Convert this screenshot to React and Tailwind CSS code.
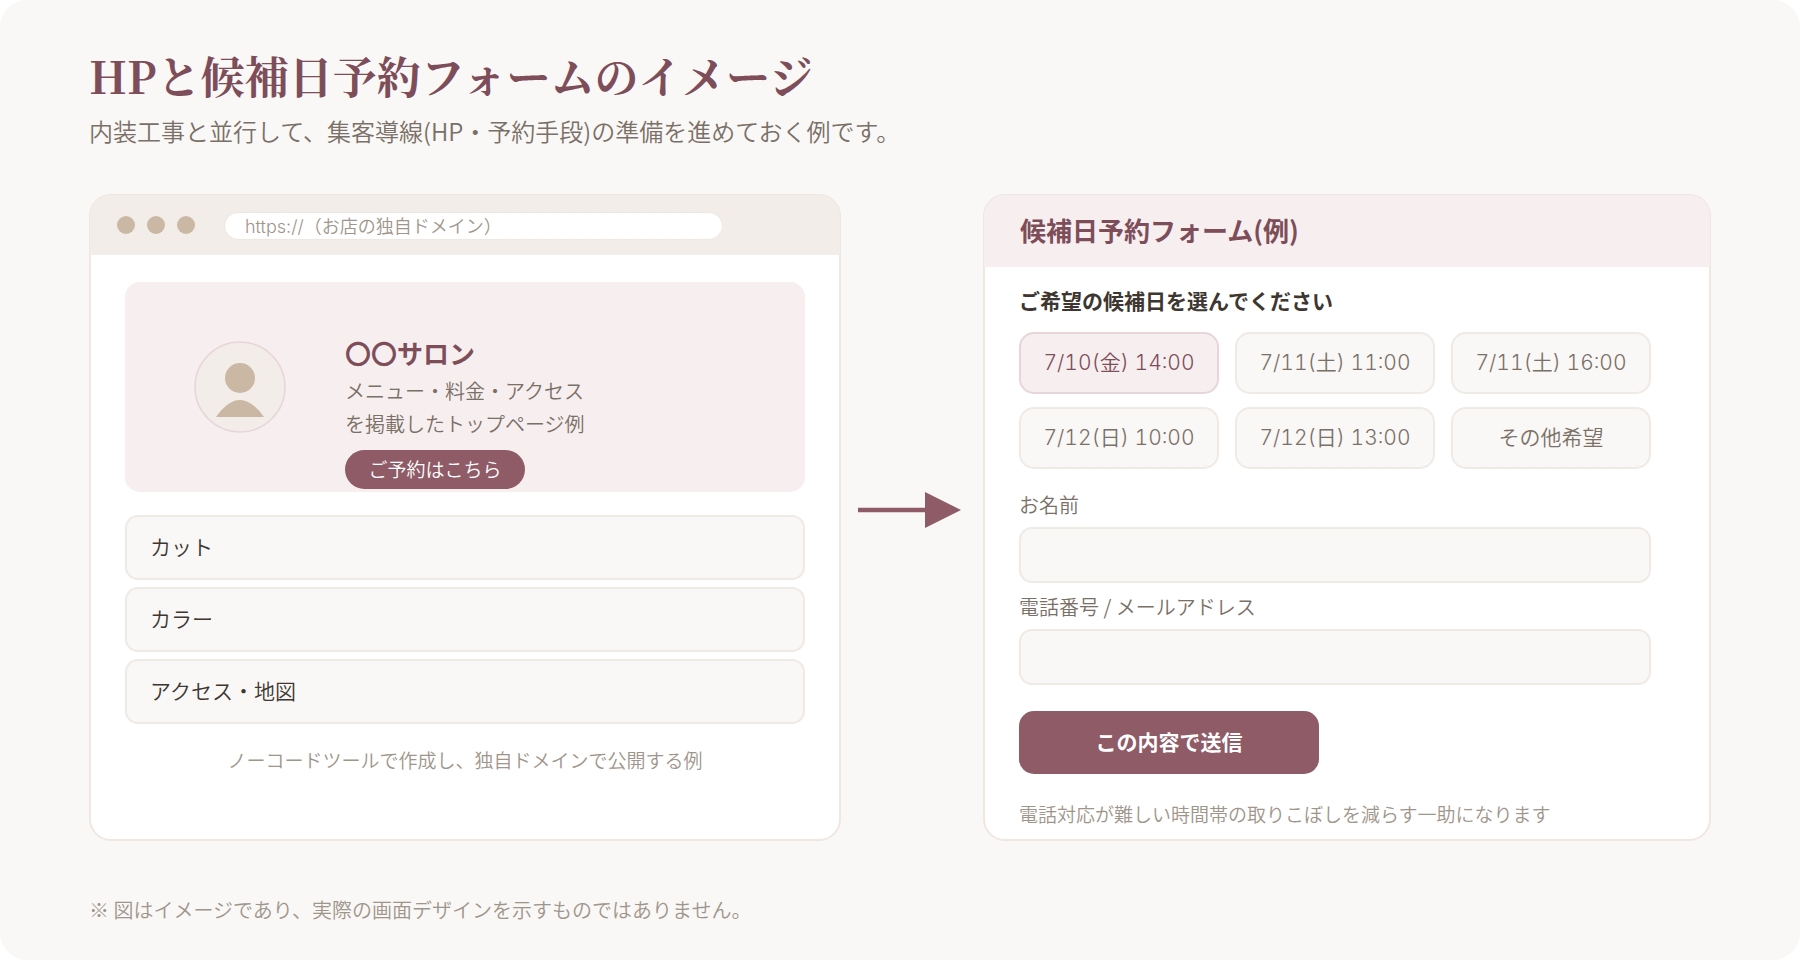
import React, { useState } from "react";

const menuItems = ["カット", "カラー", "アクセス・地図"];

const slots = [
  "7/10(金) 14:00",
  "7/11(土) 11:00",
  "7/11(土) 16:00",
  "7/12(日) 10:00",
  "7/12(日) 13:00",
  "その他希望",
];

function Avatar() {
  return (
    <svg width="92" height="92" viewBox="0 0 92 92" className="mt-2 shrink-0" aria-hidden="true">
      <circle cx="46" cy="46" r="45" fill="#f2ede8" stroke="#e8d5da" strokeWidth="1.5" />
      <circle cx="46" cy="37" r="15" fill="#cbb8a4" />
      <path d="M22 76 Q46 42 70 76 Z" fill="#cbb8a4" />
    </svg>
  );
}

function Arrow() {
  return (
    <svg width="108" height="36" viewBox="0 0 108 36" className="shrink-0" aria-hidden="true">
      <path d="M0 18 H68" stroke="#8e5b67" strokeWidth="4.5" />
      <path d="M67 0 L103 18 L67 36 Z" fill="#8e5b67" />
    </svg>
  );
}

function SitePreview() {
  return (
    <section className="rounded-[22px] border-2 border-[#efe7e0] bg-white">
      {/* Browser bar */}
      <div className="-mx-px -mt-px flex h-[60px] items-center rounded-t-[21px] bg-[#f2ede8] pl-[27px]">
        <div className="flex gap-3">
          <span className="size-[18px] rounded-full bg-[#cbb8a4]" />
          <span className="size-[18px] rounded-full bg-[#cbb8a4]" />
          <span className="size-[18px] rounded-full bg-[#cbb8a4]" />
        </div>
        <div className="mt-0.5 ml-[29px] flex h-7 w-[69%] items-center rounded-full border border-[#efe7e0] bg-white px-5 font-['Inter','Noto_Sans_CJK_JP',sans-serif] text-[18px] text-[#a0958b]">
          https://（お店の独自ドメイン）
        </div>
      </div>

      <div className="px-[34px] pt-[27px]">
        {/* Hero */}
        <div className="flex h-[210px] gap-[59px] rounded-[15px] bg-[#f7eeef] pt-[51px] pl-[69px]">
          <Avatar />
          <div>
            <h2 className="text-[26px] leading-10 font-bold text-[#7d4e5a]">〇〇サロン</h2>
            <p className="mt-px text-[20px] leading-[33px] text-[#7a7067]">
              メニュー・料金・アクセス
              <br />
              を掲載したトップページ例
            </p>
            <a
              href="#reserve"
              className="mt-2.5 flex h-[39px] w-[180px] items-center justify-center rounded-full bg-[#8e5b67] text-[19px] text-white"
            >
              ご予約はこちら
            </a>
          </div>
        </div>

        <ul className="mt-[23px] flex flex-col gap-[7px]">
          {menuItems.map((item) => (
            <li
              key={item}
              className="flex h-[65px] items-center rounded-[13px] border-2 border-[#f0eae5] bg-[#f9f8f6] px-[23px] pb-0.5 text-[21px] text-[#3d3631]"
            >
              {item}
            </li>
          ))}
        </ul>

        <p className="mt-[21px] text-center text-[19px] leading-[30px] text-[#a0958b]">
          ノーコードツールで作成し、独自ドメインで公開する例
        </p>
      </div>
    </section>
  );
}

function Field({ id, label, className }) {
  return (
    <div className={className}>
      <label htmlFor={id} className="block text-[20px] leading-[30px] text-[#7a7067]">
        {label}
      </label>
      <input
        id={id}
        type="text"
        className="mt-[7px] block h-14 w-full rounded-[13px] border-2 border-[#f0eae5] bg-[#f9f8f6] px-5 text-[20px] text-[#3d3631] outline-none focus:border-[#e8d5da]"
      />
    </div>
  );
}

function ReservationForm() {
  const [selected, setSelected] = useState(slots[0]);

  return (
    <section id="reserve" className="rounded-[22px] border-2 border-[#efe7e0] bg-white">
      <div className="-mx-px -mt-px flex h-[72px] items-center rounded-t-[21px] bg-[#f7eeef] px-9 pb-1">
        <h2 className="text-[26px] font-bold text-[#7d4e5a]">候補日予約フォーム(例)</h2>
      </div>

      <form className="pt-[18px] pr-[58px] pb-2.5 pl-[34px]" onSubmit={(e) => e.preventDefault()}>
        <fieldset>
          <legend className="text-[21px] leading-[30px] font-bold text-[#3d3631]">
            ご希望の候補日を選んでください
          </legend>
          <div className="mt-[17px] grid grid-cols-3 gap-x-4 gap-y-[13px] font-['Inter','Noto_Sans_CJK_JP',sans-serif] tabular-nums">
            {slots.map((slot) => (
              <button
                key={slot}
                type="button"
                aria-pressed={selected === slot}
                onClick={() => setSelected(slot)}
                className={`h-[62px] cursor-pointer rounded-[15px] border-2 text-[21px] ${
                  selected === slot
                    ? "border-[#e8d5da] bg-[#f7eeef] text-[#7d4e5a]"
                    : "border-[#f0eae5] bg-[#f9f8f6] text-[#7a7067]"
                }`}
              >
                {slot}
              </button>
            ))}
          </div>
        </fieldset>

        <Field id="name" label="お名前" className="mt-[21px]" />
        <Field id="contact" label="電話番号 / メールアドレス" className="mt-[9px]" />

        <button
          type="submit"
          className="mt-[26px] block h-[63px] w-[300px] cursor-pointer rounded-[15px] bg-[#8e5b67] pb-0.5 text-[21px] font-bold text-white"
        >
          この内容で送信
        </button>
        <p className="mt-[25px] text-[19px] leading-[30px] text-[#a0958b]">
          電話対応が難しい時間帯の取りこぼしを減らす一助になります
        </p>
      </form>
    </section>
  );
}

export default function App() {
  return (
    <div className="bg-white" lang="ja">
      <main className="min-h-screen rounded-[27px] bg-[#f9f8f6] px-[89px] pt-[50px] pb-[34px] font-['Noto_Sans_CJK_JP',sans-serif] font-[350]">
        <header>
          <h1 className="font-['Noto_Serif_CJK_JP','Noto_Sans_CJK_JP',serif] text-[44px] leading-[50px] font-bold text-[#7d4e5a]">
            HPと候補日予約フォームのイメージ
          </h1>
          <p className="mt-4 text-[24px] leading-[30px] text-[#7a7067]">
            内装工事と並行して、集客導線(HP・予約手段)の準備を進めておく例です。
          </p>
        </header>

        <div className="mt-12 grid grid-cols-[752fr_142fr_728fr]">
          <SitePreview />
          <div className="flex items-center justify-center pb-[15px]">
            <Arrow />
          </div>
          <ReservationForm />
        </div>

        <p className="mt-[54px] text-[20px] leading-[30px] text-[#a0958b]">
          ※ 図はイメージであり、実際の画面デザインを示すものではありません。
        </p>
      </main>
    </div>
  );
}
